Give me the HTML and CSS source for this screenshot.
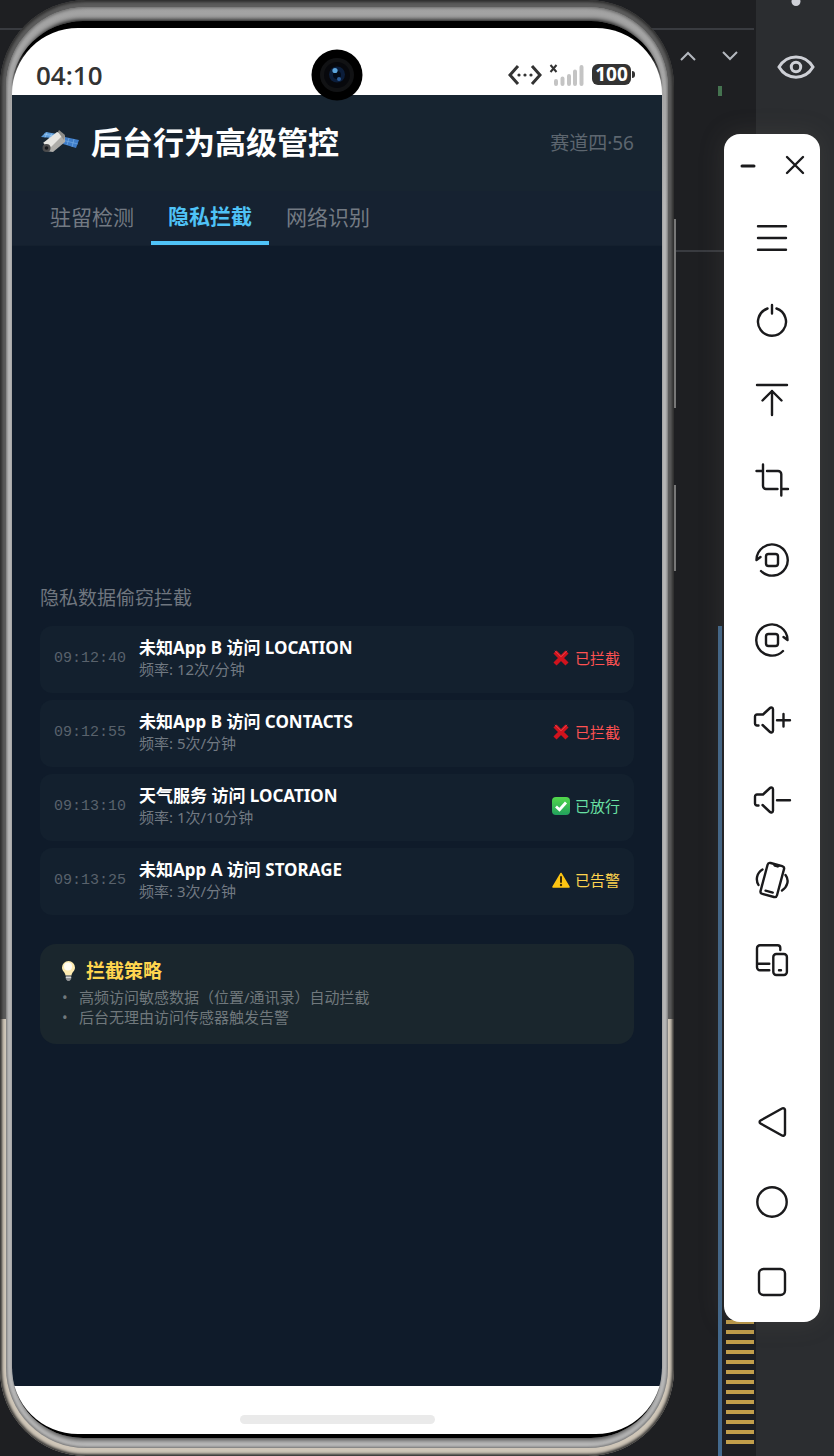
FILE: index.html
```
<!DOCTYPE html>
<html lang="zh-CN">

<head>
    <meta charset="UTF-8">
    <meta name="viewport" content="width=device-width, initial-scale=1.0">
    <title>后台行为高级管控</title>
    <link rel="stylesheet" href="styles.css">
</head>

<body>
    <div class="desktop">
        <!-- IDE window behind the emulator -->
        <div class="ide">
            <div class="editor">
                <div class="editor-toolbar"></div>
                <div class="editor-find">
                    <svg class="chevron" viewBox="0 0 18 18"><path d="M2 13l7-7 7 7" /></svg>
                    <svg class="chevron" viewBox="0 0 18 18"><path d="M2 5l7 7 7-7" /></svg>
                </div>
                <div class="mark-added"></div>
                <div class="mark-changed"></div>
                <div class="mark-warnings"></div>
            </div>
            <div class="ide-sidebar">
                <svg class="eye" viewBox="0 0 40 80">
                    <circle cx="21" cy="1.500" r="4.500" fill="#ced0d6" stroke="none" />
                    <path d="M4 67C12 53.500 30 53.500 38 67C30 80.500 12 80.500 4 67Z" />
                    <circle cx="21" cy="67" r="4.700" />
                </svg>
            </div>
        </div>

        <!-- Phone -->
        <div class="phone">
            <div class="side-key volume-key"></div>
            <div class="side-key power-key"></div>
            <div class="rim">
                <div class="bezel">
                    <div class="screen">
                        <div class="camera">
                            <svg viewBox="0 0 52 52">
                                <circle cx="26" cy="26" r="25.500" fill="#000" />
                                <circle cx="26" cy="26" r="17" fill="#111214" />
                                <circle cx="26" cy="26" r="13" fill="#07080c" />
                                <circle cx="26" cy="25.500" r="8" fill="#0b1d3a" />
                                <circle cx="26" cy="26" r="4" fill="#030a18" />
                                <circle cx="24" cy="21.500" r="2.600" fill="#5ba4dc" />
                                <circle cx="28" cy="30" r="2" fill="#2b5c99" />
                            </svg>
                        </div>
                        <div class="status-bar">
                            <span class="clock">04:10</span>
                            <div class="status-icons">
                                <svg class="net-icon" viewBox="0 0 34 24">
                                    <path d="M10 3L2 12l8 9M24 3l8 9-8 9" />
                                    <g fill="#333" stroke="none">
                                        <circle cx="11" cy="12" r="1.600" />
                                        <circle cx="17" cy="12" r="1.600" />
                                        <circle cx="23" cy="12" r="1.600" />
                                    </g>
                                </svg>
                                <svg class="signal-icon" viewBox="0 0 36 24">
                                    <path d="M1.500 2l6 7M7.500 2l-6 7" stroke="#333" stroke-width="2" />
                                    <path d="M7 18v3M13.500 15.500V21M20 13v8M26 8.500V21M32.500 4V21" stroke="#c4c4c4" stroke-width="4" stroke-linecap="round" />
                                </svg>
                                <span class="battery">100</span>
                            </div>
                        </div>

                        <div class="app">
                            <header class="app-header">
                                <svg class="satellite" viewBox="0 0 40 28">
                                    <path d="M1 9l5-5 11 2-5 4z" fill="#5b9ad8" />
                                    <path d="M4 6l10 2M7 4.500L5 9.500M12 5.500l-3 5" stroke="#a9d2f4" stroke-width=".6" />
                                    <path d="M25 9l14 3-3 8-13-4z" fill="#3f7dc8" />
                                    <path d="M24 12.500l14 3.500M29 10l-2 7M34 11l-2 8" stroke="#7db3ea" stroke-width=".6" />
                                    <path d="M4 15L18 4l7 4v6L13 24l-8-1z" fill="#aeada9" />
                                    <path d="M3 15L17 4l6 3-12 12z" fill="#e6e5e1" />
                                    <path d="M18 4l1-2 6 5-1 5z" fill="#8d8c88" />
                                    <circle cx="6.500" cy="20" r="4" fill="#4b4b4c" />
                                    <circle cx="6.500" cy="20" r="1.800" fill="#17191c" />
                                </svg>
                                <h1>后台行为高级管控</h1>
                                <span class="track">赛道四·56</span>
                            </header>

                            <nav class="tabs">
                                <button class="tab">驻留检测</button>
                                <button class="tab active">隐私拦截</button>
                                <button class="tab">网络识别</button>
                            </nav>

                            <main class="content">
                                <h2>隐私数据偷窃拦截</h2>
                                <ul class="records">
                                    <li class="record">
                                        <time>09:12:40</time>
                                        <div class="record-info">
                                            <strong>未知App B 访问 LOCATION</strong>
                                            <span>频率: 12次/分钟</span>
                                        </div>
                                        <span class="result blocked">
                                            <svg viewBox="0 0 18 18"><path d="M3 3l12 12M15 3L3 15" stroke="#d0131d" stroke-width="4.400" /><path d="M3 1.800l6 6 6-6" fill="none" stroke="#e8434c" stroke-width="1" /></svg>
                                            已拦截
                                        </span>
                                    </li>
                                    <li class="record">
                                        <time>09:12:55</time>
                                        <div class="record-info">
                                            <strong>未知App B 访问 CONTACTS</strong>
                                            <span>频率: 5次/分钟</span>
                                        </div>
                                        <span class="result blocked">
                                            <svg viewBox="0 0 18 18"><path d="M3 3l12 12M15 3L3 15" stroke="#d0131d" stroke-width="4.400" /><path d="M3 1.800l6 6 6-6" fill="none" stroke="#e8434c" stroke-width="1" /></svg>
                                            已拦截
                                        </span>
                                    </li>
                                    <li class="record">
                                        <time>09:13:10</time>
                                        <div class="record-info">
                                            <strong>天气服务 访问 LOCATION</strong>
                                            <span>频率: 1次/10分钟</span>
                                        </div>
                                        <span class="result allowed">
                                            <svg viewBox="0 0 18 18">
                                                <defs>
                                                    <linearGradient id="okFill" x1="0" y1="0" x2="0" y2="1">
                                                        <stop offset="0" stop-color="#53d94b" />
                                                        <stop offset="1" stop-color="#22a05d" />
                                                    </linearGradient>
                                                </defs>
                                                <rect width="18" height="18" rx="4" fill="url(#okFill)" />
                                                <path d="M4 9.500l3.500 3.200L14 5.500" fill="none" stroke="#fff" stroke-width="2.800" />
                                            </svg>
                                            已放行
                                        </span>
                                    </li>
                                    <li class="record">
                                        <time>09:13:25</time>
                                        <div class="record-info">
                                            <strong>未知App A 访问 STORAGE</strong>
                                            <span>频率: 3次/分钟</span>
                                        </div>
                                        <span class="result warned">
                                            <svg viewBox="0 0 18 18">
                                                <path d="M9 2.500L17 16H1z" fill="#fdc513" stroke="#fdc513" stroke-width="1.500" stroke-linejoin="round" />
                                                <path d="M9 6v5" stroke="#3b2b05" stroke-width="2" stroke-linecap="round" />
                                                <circle cx="9" cy="14" r="1.200" fill="#3b2b05" />
                                            </svg>
                                            已告警
                                        </span>
                                    </li>
                                </ul>

                                <section class="policy">
                                    <h3>
                                        <svg viewBox="0 0 16 22">
                                            <path d="M8 1a6.500 6.500 0 0 1 6.500 6.500c0 3.500-3 4.500-3.500 8H5c-.5-3.500-3.500-4.500-3.500-8A6.500 6.500 0 0 1 8 1z" fill="#fdebb0" />
                                            <circle cx="7.500" cy="6.500" r="4" fill="#fffdf4" />
                                            <path d="M5.300 15.500h5.400v3.500L9 21H7l-1.700-2z" fill="#8f9193" />
                                            <path d="M5.300 17.500h5.400" stroke="#d3d5d6" />
                                        </svg>
                                        拦截策略
                                    </h3>
                                    <ul>
                                        <li>高频访问敏感数据（位置/通讯录）自动拦截</li>
                                        <li>后台无理由访问传感器触发告警</li>
                                    </ul>
                                </section>
                            </main>
                        </div>

                        <div class="home-bar"><span></span></div>
                    </div>
                </div>
            </div>
        </div>

        <!-- Emulator controls -->
        <aside class="controls">
            <div class="window-buttons">
                <button aria-label="最小化"><svg viewBox="0 0 20 20"><path d="M4 11h12" stroke-width="3" /></svg></button>
                <button aria-label="关闭"><svg viewBox="0 0 20 20"><path d="M2 2l16 16M18 2L2 18" /></svg></button>
            </div>
            <div class="control-group">
                <button aria-label="菜单"><svg viewBox="0 0 40 40"><path d="M6 6.300h28M6 18h28M6 29.700h28" /></svg></button>
                <button aria-label="电源"><svg viewBox="0 0 40 40"><path d="M15.500 8.500a14 14 0 1 0 9 0M20 5v8.500" /></svg></button>
                <button aria-label="上滑"><svg viewBox="0 0 40 40"><path d="M5 5h30M20 11v24M10.500 20.500L20 11l9.500 9.500" /></svg></button>
                <button aria-label="截屏"><svg viewBox="0 0 40 40"><path d="M11 4.500V26a3 3 0 0 0 3 3h11.500M4.500 11H10M15 11h11a3.300 3.300 0 0 1 3.300 3.300V35.500M31 29h5" /></svg></button>
                <button aria-label="向左旋转"><svg viewBox="0 0 40 40"><path d="M4.500 19.500A15.600 15.600 0 1 1 9 31M4.500 20l4-3" /><rect x="14" y="14" width="12" height="12" rx="2.500" /></svg></button>
                <button aria-label="向右旋转"><svg viewBox="0 0 40 40"><path d="M35.500 19.500A15.600 15.600 0 1 0 31 31M35.500 20l-4-3" /><rect x="14" y="14" width="12" height="12" rx="2.500" /></svg></button>
                <button aria-label="音量加"><svg viewBox="0 0 40 40"><path d="M6.500 25.500H5a2 2 0 0 1-2-2v-7a2 2 0 0 1 2-2h6l7-6.500a1.800 1.800 0 0 1 3 1.300v21.400a1.800 1.800 0 0 1-3 1.300l-7.500-7M25 20.300h13M31.500 14v12.600" /></svg></button>
                <button aria-label="音量减"><svg viewBox="0 0 40 40"><path d="M6.500 25.500H5a2 2 0 0 1-2-2v-7a2 2 0 0 1 2-2h6l7-6.500a1.800 1.800 0 0 1 3 1.300v21.400a1.800 1.800 0 0 1-3 1.300l-7.500-7M25 20.300h13" /></svg></button>
                <button aria-label="摇一摇">
                    <svg viewBox="0 0 40 40">
                        <g transform="rotate(15 20.300 20)">
                            <rect x="11.800" y="4" width="17" height="32" rx="2.500" />
                            <path d="M18 4.500l1 1h3l1-1M16.500 32h7.500" />
                        </g>
                        <path d="M10.500 9.500C4.500 13 3.500 20 6.500 25M33.500 15C37.500 20 35.500 27 30 30.500" />
                    </svg>
                </button>
                <button aria-label="多设备"><svg viewBox="0 0 40 40"><path d="M28.300 10V8a2.700 2.700 0 0 0-2.700-2.700H8A3 3 0 0 0 5 8.300v19A3 3 0 0 0 8 30.300h9.300M5 23.700h12.300M27 30.300h2" /><rect x="21.300" y="14" width="13.600" height="21" rx="3" /></svg></button>
            </div>
            <div class="control-group nav-group">
                <button aria-label="返回"><svg viewBox="0 0 40 40"><path d="M8.500 18.500L30 6.500a2 2 0 0 1 3 1.500v24a2 2 0 0 1-3 1.500L8.500 21.500a1.700 1.700 0 0 1 0-3z" /></svg></button>
                <button aria-label="主页"><svg viewBox="0 0 40 40"><circle cx="20" cy="20" r="14.700" /></svg></button>
                <button aria-label="最近任务"><svg viewBox="0 0 40 40"><rect x="7" y="7" width="26" height="26" rx="4.500" /></svg></button>
            </div>
        </aside>
    </div>
</body>

</html>
```
FILE: styles.css
```
* {
    box-sizing: border-box;
}

body {
    margin: 0;
    font-family: "Noto Sans", "Noto Sans CJK SC", sans-serif;
    background-color: #1e1f22;
}

button {
    padding: 0;
    border: none;
    background: none;
    font-family: inherit;
    cursor: pointer;
}

h1,
h2,
h3,
ul {
    margin: 0;
    padding: 0;
}

ul {
    list-style: none;
}

.desktop {
    position: relative;
    display: flex;
    min-height: 100vh;
}

/* IDE background */
.ide {
    position: absolute;
    inset: 0;
    display: flex;
    overflow: hidden;
}

.editor {
    position: relative;
    flex: 1;
    background-color: #1e1f22;
}

.editor-toolbar {
    height: 30px;
    margin-right: 2px;
    border-bottom: 2px solid #393b40;
}

.editor-find {
    display: flex;
    justify-content: flex-end;
    gap: 24px;
    height: 222px;
    padding: 17px 17px 0 0;
    border-bottom: 2px solid #393b40;
}

.chevron {
    width: 18px;
    height: 18px;
    fill: none;
    stroke: #b4b8bf;
    stroke-width: 2;
}

.mark-added,
.mark-changed {
    position: absolute;
    right: 34px;
    width: 4px;
}

.mark-added {
    top: 86px;
    height: 10px;
    background-color: #457350;
}

.mark-changed {
    top: 626px;
    bottom: 0;
    background-color: #43698d;
}

.mark-warnings {
    position: absolute;
    right: 2px;
    bottom: 12px;
    width: 28px;
    height: 130px;
    background: repeating-linear-gradient(transparent 0 6px, #c29e4a 6px 10px);
}

.ide-sidebar {
    width: 78px;
    text-align: center;
    background-color: #2b2d30;
}

.eye {
    width: 40px;
    height: 80px;
    fill: none;
    stroke: #ced0d6;
    stroke-width: 3;
}

/* Phone shell */
.phone {
    position: relative;
    display: flex;
    flex: 1;
    padding: 7px 6px 8px;
    border-radius: 86px;
    background: linear-gradient(#5c5c5c 70%, #cfc6b8 70%);
    box-shadow: inset 0 0 3px 2px #2c2c2c;
}

.rim {
    display: flex;
    flex: 1;
    padding: 14px 5px 10px;
    border-radius: 80px;
    background: linear-gradient(#a2a2a2, #bdbdbd 200px);
    box-shadow: inset 0 0 3px 1px #6b6b6b;
}

.bezel {
    display: flex;
    flex: 1;
    padding: 7px 1px 4px;
    border-radius: 72px;
    background: linear-gradient(#000 30px, #a8a8a8 70px, #a8a8a8 calc(100% - 60px), #000 calc(100% - 25px));
    box-shadow: 0 -5px 5px -4px #000, 0 6px 5px -4px #444;
}

.side-key {
    position: absolute;
    right: -2px;
    width: 2px;
    background-color: #777;
}

.volume-key {
    top: 219px;
    height: 189px;
}

.power-key {
    top: 485px;
    height: 86px;
}

.screen {
    position: relative;
    display: flex;
    flex: 1;
    flex-direction: column;
    border-radius: 66px;
    background-color: #fff;
    overflow: hidden;
}

.camera {
    position: absolute;
    top: 21px;
    left: 50%;
    width: 52px;
    height: 52px;
    margin-left: -26px;
    z-index: 1;
}

.status-bar {
    display: flex;
    align-items: center;
    justify-content: space-between;
    height: 67px;
    padding: 26px 28px 0 24px;
    color: #333;
}

.clock {
    font-family: "Open Sans", sans-serif;
    font-size: 26px;
    font-weight: 600;
    line-height: 38px;
}

.status-icons {
    display: flex;
    align-items: center;
    gap: 7px;
}

.net-icon {
    width: 34px;
    height: 24px;
    fill: none;
    stroke: #333;
    stroke-width: 3;
}

.signal-icon {
    width: 36px;
    height: 24px;
}

.battery {
    position: relative;
    width: 39px;
    margin-right: 3px;
    border-radius: 6px;
    background-color: #333;
    color: #fff;
    font-size: 19px;
    font-weight: 700;
    line-height: 21px;
    text-align: center;
}

.battery::after {
    content: "";
    position: absolute;
    top: 7px;
    right: -4px;
    width: 3px;
    height: 7px;
    border-radius: 0 3px 3px 0;
    background-color: #333;
}

/* App */
.app {
    display: flex;
    flex: 1;
    flex-direction: column;
    background-color: #0f1b2a;
    color: #fff;
}

.app-header {
    display: flex;
    align-items: center;
    height: 96px;
    padding: 0 28px 3px;
    background-color: #172430;
}

.satellite {
    width: 40px;
    height: 28px;
}

.app-header h1 {
    margin-left: 11px;
    font-size: 31px;
    line-height: 44px;
}

.track {
    margin-left: auto;
    color: #5d666f;
    font-size: 19px;
}

.tabs {
    display: flex;
    height: 55px;
    padding: 0 21px;
    background-color: #162231;
    border-bottom: 1px solid #14202e;
}

.tab {
    padding: 0 17px 4px;
    color: #737a83;
    font-size: 21px;
}

.tab.active {
    padding-bottom: 2px;
    border-bottom: 4px solid #4fc3f7;
    color: #4fc3f7;
    font-weight: 700;
}

.content {
    display: flex;
    flex: 1;
    flex-direction: column;
    justify-content: center;
    padding: 0 28px 2px;
}

.content h2 {
    margin-bottom: 16px;
    color: #6f767f;
    font-size: 19px;
    font-weight: 400;
    line-height: 24px;
}

.records {
    display: flex;
    flex-direction: column;
    gap: 7px;
}

.record {
    display: flex;
    align-items: center;
    gap: 12px;
    padding: 11px 14px 14px;
    border-radius: 12px;
    background-color: #13202e;
}

.record time {
    width: 73px;
    color: #59626c;
    font-family: "Liberation Mono", monospace;
    font-size: 15px;
}

.record-info {
    flex: 1;
}

.record-info strong,
.record-info span {
    display: block;
}

.record-info strong {
    font-size: 17px;
    line-height: 22px;
}

.record-info span {
    color: #717982;
    font-size: 15px;
    line-height: 20px;
}

.result {
    display: flex;
    align-items: center;
    gap: 5px;
    font-size: 15px;
    line-height: 20px;
}

.result svg {
    width: 18px;
    height: 18px;
}

.blocked {
    color: #ff5252;
}

.allowed {
    color: #69e0a4;
}

.warned {
    color: #ffd54f;
}

.policy {
    margin-top: 29px;
    padding: 15px 20px 17px;
    border-radius: 16px;
    background-color: #1a262d;
}

.policy h3 {
    display: flex;
    align-items: center;
    gap: 9px;
    margin-bottom: 4px;
    color: #ffd54f;
    font-size: 19px;
    line-height: 24px;
}

.policy h3 svg {
    width: 17px;
    height: 22px;
}

.policy li {
    display: flex;
    color: #70787c;
    font-size: 15px;
    line-height: 20px;
}

.policy li::before {
    content: "•";
    width: 17px;
    padding-left: 2px;
}

.home-bar {
    height: 48px;
    padding-top: 29px;
}

.home-bar span {
    display: block;
    width: 30%;
    height: 9px;
    margin: 0 auto;
    border-radius: 5px;
    background-color: #eaeaea;
}

/* Emulator controls */
.controls {
    position: relative;
    width: 96px;
    margin: 134px 14px auto 50px;
    border-radius: 16px;
    background-color: #fff;
    box-shadow: 0 0 24px rgba(90, 85, 75, 0.3);
}

.controls svg {
    display: block;
    fill: none;
    stroke: #1a1a1c;
    stroke-width: 2.4;
    stroke-linecap: round;
    stroke-linejoin: round;
}

.window-buttons {
    display: flex;
    justify-content: space-between;
    height: 66px;
    padding: 21px 15px 0 14px;
}

.window-buttons button {
    width: 20px;
    height: 20px;
}

.control-group button {
    display: flex;
    align-items: center;
    justify-content: center;
    width: 100%;
    height: 80px;
}

.control-group svg {
    width: 40px;
    height: 40px;
}

.nav-group {
    margin-top: 82px;
}
```
